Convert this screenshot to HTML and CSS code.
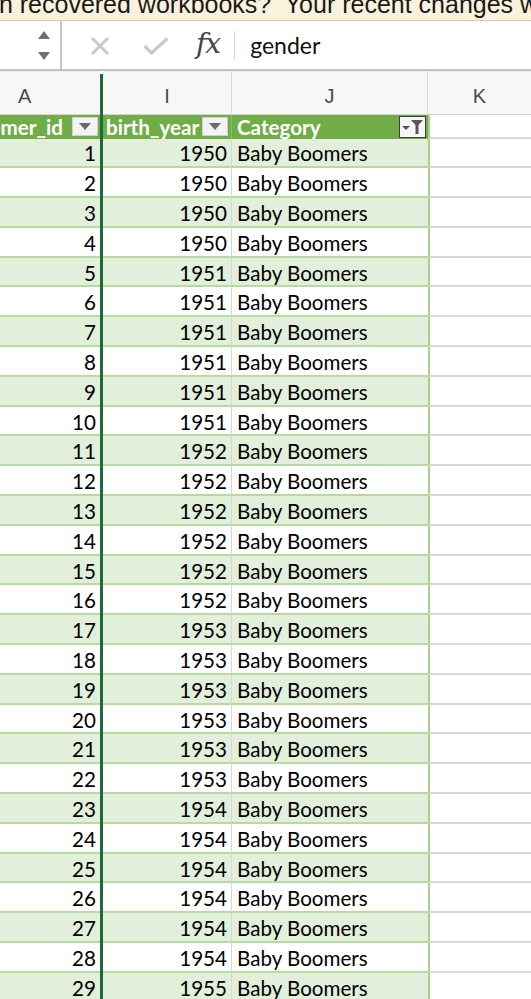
FILE: index.html
```html
<!DOCTYPE html>
<html>
<head>
<meta charset="utf-8">
<link rel="stylesheet" href="styles.css">
</head>
<body>
<div class="banner"><span class="banner-text">en recovered workbooks?&nbsp; Your recent changes were saved.</span></div>
<div class="fbar">
  <div class="namebox">
    <svg class="spin" width="14" height="32" viewBox="0 0 14 32"><path d="M1 9 L7 1 L13 9 Z" fill="#6e6e6e"/><path d="M1 22 L13 22 L7 30 Z" fill="#6e6e6e"/></svg>
  </div>
  <div class="fbtns">
    <svg class="ico-x" width="20" height="18" viewBox="0 0 20 18"><path d="M2 1 L18 17 M18 1 L2 17" stroke="#c9c9c9" stroke-width="3" fill="none"/></svg>
    <svg class="ico-ok" width="26" height="18" viewBox="0 0 26 18"><path d="M1.5 9 L8.5 16 L24.5 1.5" stroke="#c9c9c9" stroke-width="3.2" fill="none"/></svg>
    <span class="fx">fx</span>
    <span class="fsep"></span>
  </div>
  <div class="ftext">gender</div>
</div>
<div class="sheet">
  <div class="freeze"></div>
  <div class="ch ch-a">A</div><div class="ch ch-i">I</div><div class="ch ch-j">J</div><div class="ch ch-k">K</div>
  <div class="h h-a"><span class="htxt">customer_id</span><span class="dd"><svg width="12" height="7" viewBox="0 0 12 7"><path d="M0 0 L12 0 L6 7 Z" fill="#6b6b6b"/></svg></span></div>
  <div class="h h-i"><span class="htxt">birth_year</span><span class="dd"><svg width="12" height="7" viewBox="0 0 12 7"><path d="M0 0 L12 0 L6 7 Z" fill="#6b6b6b"/></svg></span></div>
  <div class="h h-j"><span class="htxt">Category</span><span class="fl"><svg width="24" height="18" viewBox="0 0 24 18"><path d="M1 8 L9 8 L5 12 Z" fill="#555"/><path d="M10 2 L22 2 L17.5 7 L17.5 16 L14.5 16 L14.5 7 Z" fill="#555"/></svg></span></div>
  <div class="h h-k"></div>

  <div class="c a b">1</div><div class="c i b">1950</div><div class="c j b">Baby Boomers</div><div class="c k"></div>
  <div class="c a">2</div><div class="c i">1950</div><div class="c j">Baby Boomers</div><div class="c k"></div>
  <div class="c a b">3</div><div class="c i b">1950</div><div class="c j b">Baby Boomers</div><div class="c k"></div>
  <div class="c a">4</div><div class="c i">1950</div><div class="c j">Baby Boomers</div><div class="c k"></div>
  <div class="c a b">5</div><div class="c i b">1951</div><div class="c j b">Baby Boomers</div><div class="c k"></div>
  <div class="c a">6</div><div class="c i">1951</div><div class="c j">Baby Boomers</div><div class="c k"></div>
  <div class="c a b">7</div><div class="c i b">1951</div><div class="c j b">Baby Boomers</div><div class="c k"></div>
  <div class="c a">8</div><div class="c i">1951</div><div class="c j">Baby Boomers</div><div class="c k"></div>
  <div class="c a b">9</div><div class="c i b">1951</div><div class="c j b">Baby Boomers</div><div class="c k"></div>
  <div class="c a">10</div><div class="c i">1951</div><div class="c j">Baby Boomers</div><div class="c k"></div>
  <div class="c a b">11</div><div class="c i b">1952</div><div class="c j b">Baby Boomers</div><div class="c k"></div>
  <div class="c a">12</div><div class="c i">1952</div><div class="c j">Baby Boomers</div><div class="c k"></div>
  <div class="c a b">13</div><div class="c i b">1952</div><div class="c j b">Baby Boomers</div><div class="c k"></div>
  <div class="c a">14</div><div class="c i">1952</div><div class="c j">Baby Boomers</div><div class="c k"></div>
  <div class="c a b">15</div><div class="c i b">1952</div><div class="c j b">Baby Boomers</div><div class="c k"></div>
  <div class="c a">16</div><div class="c i">1952</div><div class="c j">Baby Boomers</div><div class="c k"></div>
  <div class="c a b">17</div><div class="c i b">1953</div><div class="c j b">Baby Boomers</div><div class="c k"></div>
  <div class="c a">18</div><div class="c i">1953</div><div class="c j">Baby Boomers</div><div class="c k"></div>
  <div class="c a b">19</div><div class="c i b">1953</div><div class="c j b">Baby Boomers</div><div class="c k"></div>
  <div class="c a">20</div><div class="c i">1953</div><div class="c j">Baby Boomers</div><div class="c k"></div>
  <div class="c a b">21</div><div class="c i b">1953</div><div class="c j b">Baby Boomers</div><div class="c k"></div>
  <div class="c a">22</div><div class="c i">1953</div><div class="c j">Baby Boomers</div><div class="c k"></div>
  <div class="c a b">23</div><div class="c i b">1954</div><div class="c j b">Baby Boomers</div><div class="c k"></div>
  <div class="c a">24</div><div class="c i">1954</div><div class="c j">Baby Boomers</div><div class="c k"></div>
  <div class="c a b">25</div><div class="c i b">1954</div><div class="c j b">Baby Boomers</div><div class="c k"></div>
  <div class="c a">26</div><div class="c i">1954</div><div class="c j">Baby Boomers</div><div class="c k"></div>
  <div class="c a b">27</div><div class="c i b">1954</div><div class="c j b">Baby Boomers</div><div class="c k"></div>
  <div class="c a">28</div><div class="c i">1954</div><div class="c j">Baby Boomers</div><div class="c k"></div>
  <div class="c a b">29</div><div class="c i b">1955</div><div class="c j b">Baby Boomers</div><div class="c k"></div>
</div>
</body>
</html>
```

FILE: styles.css
```css
html, body {
  margin: 0;
  padding: 0;
  background: #ffffff;
  overflow: hidden;
}
body {
  width: 531px;
  height: 999px;
  font-family: Lato, "Liberation Sans", sans-serif;
}

.banner {
  height: 20px;
  background: #fbf2dd;
  border-bottom: 1px solid #d6cdb9;
  overflow: hidden;
  display: flex;
  align-items: flex-start;
  white-space: nowrap;
}
.banner-text {
  font-family: "Liberation Sans", Arial, sans-serif;
  font-size: 25px;
  line-height: 25px;
  color: #1a1a1a;
  margin-left: -15px;
  margin-top: -8px;
}

.fbar {
  height: 48px;
  display: flex;
  align-items: stretch;
  border-bottom: 2px solid #c2c2c2;
  background: #ffffff;
}
.namebox {
  width: 62px;
  border-right: 2px solid #c6c6c6;
  display: flex;
  align-items: center;
  justify-content: flex-end;
  padding-right: 9px;
  box-sizing: border-box;
}
.spin { display: block; margin-top: 2px; }
.fbtns {
  display: flex;
  align-items: center;
  padding-left: 28px;
}
.ico-x { display: block; margin-top: 2px; }
.ico-ok { display: block; margin-left: 33px; margin-top: 2px; }
.fx {
  font-family: "DejaVu Serif", "Liberation Serif", serif;
  font-style: italic;
  font-size: 28px;
  color: #444;
  margin-left: 27px;
  margin-top: -3px;
  letter-spacing: -1px;
}
.fsep {
  width: 1px;
  height: 29px;
  background: #d8d8d8;
  margin-left: 14px;
}
.ftext {
  display: flex;
  align-items: center;
  padding-left: 15px;
  font-family: Lato, "Liberation Sans", sans-serif;
  font-size: 23px;
  color: #111;
}

.sheet {
  display: grid;
  grid-template-columns: 100px 3px 129px 196px 1fr;
  grid-template-rows: 44px 23.5px repeat(29, 29.8px);
  font-size: 20.6px;
}
.freeze {
  grid-column: 2;
  grid-row: 1 / -1;
  background: #1e6b3a;
  margin-top: 3px;
}

.ch {
  background: #f7f7f7;
  border-top: 1px solid #ececec;
  border-bottom: 1px solid #d4d4d4;
  display: flex;
  align-items: center;
  justify-content: center;
  font-family: "Liberation Sans", Arial, sans-serif;
  font-size: 20px;
  color: #4a4a4a;
  padding-top: 6px;
  box-sizing: border-box;
}
.ch-a { justify-content: flex-start; padding-left: 18px; }
.ch-i { border-right: 1px solid #dadada; }
.ch-j { border-right: 1px solid #dadada; }

.h {
  background: #70ad47;
  color: #ffffff;
  font-weight: 700;
  display: flex;
  align-items: center;
  overflow: hidden;
  white-space: nowrap;
  box-sizing: border-box;
}
.htxt { flex: none; }
.h-a { justify-content: flex-end; padding-right: 2px; }
.h-a .htxt { margin-right: 9px; }
.h-i { padding-left: 3px; padding-right: 3px; justify-content: space-between; border-right: 1px solid #8bbd6a; }
.h-j { padding-left: 5px; padding-right: 2px; justify-content: space-between; }
.h-k { background: #ffffff; border-left: 2px solid #a9d08e; border-bottom: 2px solid #d8d8d8; }

.dd {
  width: 26px;
  height: 19px;
  background: #f3f3f3;
  border: 1px solid #d0d0d0;
  box-sizing: border-box;
  display: flex;
  align-items: center;
  justify-content: center;
  flex: none;
}
.dd svg { display: block; }
.fl {
  width: 27px;
  height: 22px;
  background: #f6f6f6;
  border: 1px solid #3d3d3d;
  box-sizing: border-box;
  display: flex;
  align-items: center;
  justify-content: center;
  flex: none;
}
.fl svg { display: block; }

.c {
  display: flex;
  align-items: center;
  box-sizing: border-box;
  color: #000;
  white-space: nowrap;
  overflow: hidden;
  border-bottom: 2px solid #b6da9f;
  padding-top: 2px;
}
.c.b { background: #e2efda; }
.a { justify-content: flex-end; padding-right: 4px; }
.i { justify-content: flex-end; padding-right: 4px; border-right: 1px solid #d6d6d6; }
.j { padding-left: 5px; }
.k { border-left: 2px solid #a9d08e; border-bottom: 2px solid #d8d8d8; }
```
